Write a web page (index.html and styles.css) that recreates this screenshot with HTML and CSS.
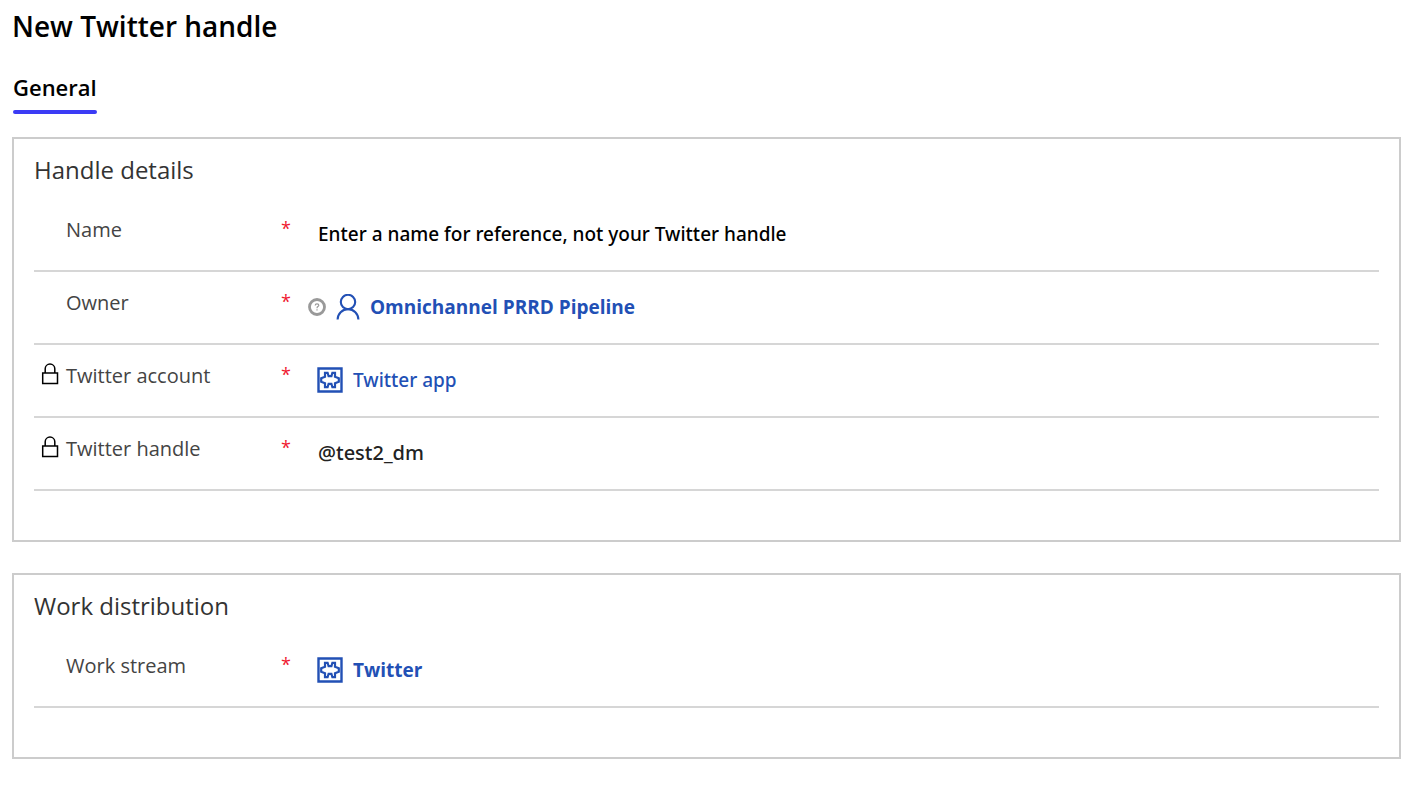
FILE: index.html
```html
<!DOCTYPE html>
<html lang="en">
<head>
<meta charset="utf-8">
<title>New Twitter handle</title>
<meta name="viewport" content="width=device-width, initial-scale=1">
<link rel="stylesheet" href="styles.css">
</head>
<body>
<svg class="sprite" aria-hidden="true">
  <symbol id="lock" viewBox="0 0 18 24"><path d="M1.700 11h14.800v10.500H1.700zM4.200 11V6.800a4.800 4.800 0 0 1 9.600 0V11" fill="none" stroke="currentColor" stroke-width="1.500"/></symbol>
  <symbol id="entity" viewBox="0 0 26 26"><path d="M1.500 1.500h23v23h-23z" fill="none" stroke="currentColor" stroke-width="2.400"/><path d="M8 5.800h2.600l1 3.400h2.800l1-3.400H18v4l3.800 1.400v3.600L18 16.200v4h-2.600l-1-3.400h-2.800l-1 3.400H8v-4l-3.800-1.400v-3.600L8 9.800z" fill="none" stroke="currentColor" stroke-width="2.200"/></symbol>
</svg>
<main class="page">
  <h1 class="page-title">New Twitter handle</h1>
  <nav class="tabs"><button class="tab" type="button">General</button></nav>
  <form class="form">
    <section class="card">
      <h2 class="card-title">Handle details</h2>
      <div class="row">
        <label class="label" for="name">Name</label>
        <span class="required">*</span>
        <input class="value name-input" id="name" type="text" value="Enter a name for reference, not your Twitter handle">
      </div>
      <div class="row">
        <span class="label">Owner</span>
        <span class="required">*</span>
        <div class="value owner">
          <svg class="help" viewBox="0 0 18 18" aria-hidden="true"><circle cx="9" cy="9" r="7.500" fill="none" stroke="currentColor" stroke-width="2.800"/><path d="M7.200 7.500q0-1.700 1.800-1.700t1.800 1.500q0 .8-.9 1.300t-.9 1.600M9 11.300v1.200" fill="none" stroke="currentColor" stroke-width="1.200"/></svg>
          <svg class="person" viewBox="0 0 24 26" aria-hidden="true"><circle cx="12" cy="8" r="7.200" fill="none" stroke="currentColor" stroke-width="2.100"/><path d="M1.600 25.500a10.400 10.400 0 0 1 20.800 0" fill="none" stroke="currentColor" stroke-width="2.100"/></svg>
          <a class="link strong" href="#owner">Omnichannel PRRD Pipeline</a>
        </div>
      </div>
      <div class="row">
        <span class="label"><svg class="lock" aria-hidden="true"><use href="#lock"/></svg>Twitter account</span>
        <span class="required">*</span>
        <div class="value"><svg class="entity" aria-hidden="true"><use href="#entity"/></svg><a class="link" href="#account">Twitter app</a></div>
      </div>
      <div class="row">
        <span class="label"><svg class="lock" aria-hidden="true"><use href="#lock"/></svg>Twitter handle</span>
        <span class="required">*</span>
        <div class="value handle">@test2_dm</div>
      </div>
    </section>
    <section class="card">
      <h2 class="card-title">Work distribution</h2>
      <div class="row">
        <span class="label">Work stream</span>
        <span class="required">*</span>
        <div class="value"><svg class="entity" aria-hidden="true"><use href="#entity"/></svg><a class="link strong" href="#stream">Twitter</a></div>
      </div>
    </section>
  </form>
</main>
</body>
</html>
```
FILE: styles.css
```css
* { box-sizing: border-box; }
body { margin: 0; background: #fff; color: #000; font-family: "Open Sans", "Noto Sans", sans-serif; font-size: 20px; line-height: 28px; }
.sprite { display: none; }
.page { padding: 8px 13px 27px 12px; }
.page-title { margin: 0; font-size: 28px; line-height: 36px; font-weight: 600; }
.tabs { display: flex; margin: 27px 0 28px 1px; }
.tab { padding: 0 0 6px; border: 0; background: none; font: 600 22px/32px "Open Sans", "Noto Sans", sans-serif; color: #000; position: relative; }
.tab::after { content: ""; display: block; position: absolute; left: 0; right: 0; bottom: -5px; height: 4px; border-radius: 2px; background: #3b3bf5; }
.form { display: flex; flex-direction: column; gap: 31px; }
.card { border: 2px solid #ccc; padding: 0 20px 49px; }
.card-title { margin: 0; padding: 13px 0 11px; font-size: 24px; line-height: 36px; font-weight: 400; color: #333; }
.row { display: grid; grid-template-columns: 247px 25px 1fr; align-items: start; min-height: 73px; padding-top: 17px; border-bottom: 2px solid #d6d6d6; }
.label { display: flex; padding-left: 32px; color: #444; position: relative; }
.lock { position: absolute; left: 7px; top: 0; width: 18px; height: 24px; color: #000; }
.required { color: #f01830; font-size: 18px; line-height: 24px; }
.value { display: flex; align-items: center; gap: 10px; margin-top: 4px; padding-left: 11px; min-width: 0; font-family: "Noto Sans", "Open Sans", sans-serif; font-size: 19px; font-weight: 500; }
.name-input { width: 100%; height: 28px; padding: 0 0 0 12px; border: 0; outline: 0; background: none; color: #000; line-height: 28px; }
.handle { padding-left: 12px; color: #222; font-size: 20px; }
.owner { padding-left: 2px; }
.link { color: #2250b5; text-decoration: none; }
.strong { font-family: "Open Sans", "Noto Sans", sans-serif; font-weight: 700; }
.help { width: 18px; height: 18px; color: #999; }
.person { width: 24px; height: 26px; color: #2250b5; }
.entity { width: 26px; height: 26px; color: #2250b5; }
```
